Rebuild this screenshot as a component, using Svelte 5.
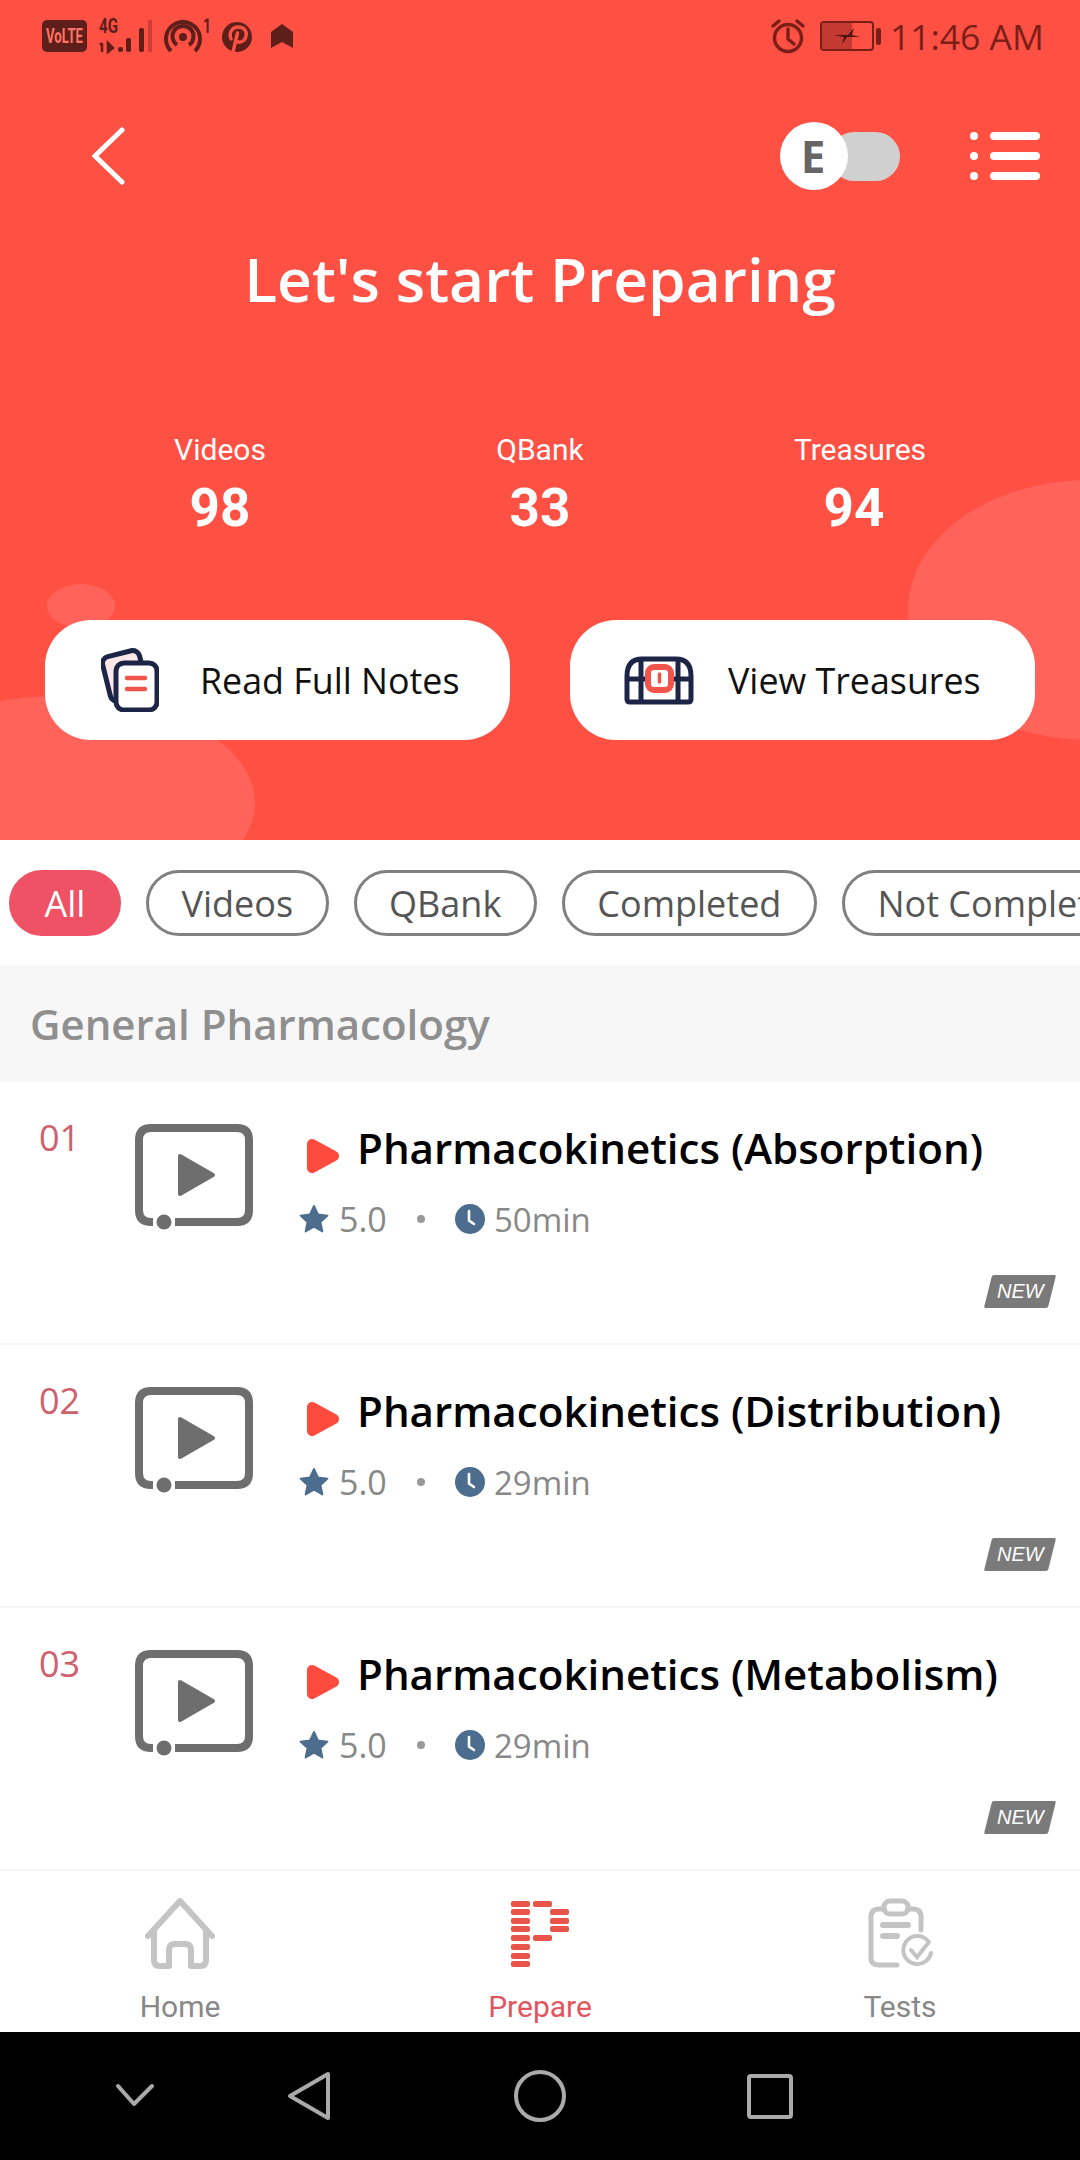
<script>
  const stats = [
    { label: "Videos", value: "98" },
    { label: "QBank", value: "33" },
    { label: "Treasures", value: "94", nudge: true }
  ];
  const filters = ["All", "Videos", "QBank", "Completed", "Not Completed"];
  const lessons = [
    { no: "01", title: "Pharmacokinetics (Absorption)", time: "50min" },
    { no: "02", title: "Pharmacokinetics (Distribution)", time: "29min" },
    { no: "03", title: "Pharmacokinetics (Metabolism)", time: "29min" }
  ];
  const pLeft = [3, 11, 20, 28, 37, 46, 55, 63];
  const pRight = [
    { x: 22, y: 3 },
    { x: 39, y: 11 },
    { x: 39, y: 20 },
    { x: 39, y: 28 },
    { x: 22, y: 37 }
  ];
</script>

<div class="screen">
  <header class="hero">
    <span class="blob blob-right"></span>
    <span class="blob blob-small"></span>
    <span class="blob blob-left"></span>

    <div class="status">
      <svg class="status-left" width="252" height="56" viewBox="0 -8 252 56">
        <rect x="0" y="4" width="45" height="32" rx="5" fill="#5e1e1a" />
        <text x="4" y="27" class="volte" textLength="37" lengthAdjust="spacingAndGlyphs">VoLTE</text>
        <text x="57" y="17" class="net" textLength="19" lengthAdjust="spacingAndGlyphs">4G</text>
        <path d="M60 27 v9 M58 29 l2 -2 M66 27 v9 l5 -4 z" stroke="#5e1e1a" stroke-width="2.5" fill="#5e1e1a" />
        <rect x="76" y="31" width="5" height="5" rx="2" fill="#5e1e1a" />
        <rect x="84" y="22" width="5" height="14" rx="2" fill="#5e1e1a" />
        <rect x="97" y="12" width="5" height="24" rx="2" fill="#5e1e1a" />
        <rect x="106" y="4" width="4" height="32" fill="#5e1e1a" opacity="0.3" />
        <circle cx="141" cy="21" r="4" fill="#5e1e1a" />
        <path d="M135 29 A10.5 10.5 0 1 1 147 29" fill="none" stroke="#5e1e1a" stroke-width="4" />
        <path d="M129 35 A17 17 0 1 1 153 35" fill="none" stroke="#5e1e1a" stroke-width="4" />
        <text x="161" y="17" class="net" textLength="8" lengthAdjust="spacingAndGlyphs">1</text>
        <circle cx="195" cy="21" r="15" fill="#5e1e1a" />
        <path d="M191 36 L195.5 17 M189 23 C186 15 192 11 196 11 C203 11 205 16 204 20 C203 26 196 28 193.5 24" fill="none" stroke="#ff5044" stroke-width="3.4" stroke-linecap="round" />
        <path d="M229 16 L240 8 L251 16 V32 L240 26 L229 32 Z" fill="#5e1e1a" />
      </svg>
      <div class="status-right">
        <svg width="34" height="36" viewBox="0 0 34 36" fill="none" stroke="#7a1f18" stroke-width="3.4">
          <circle cx="17" cy="20" r="13.5" />
          <path d="M17 11 V21 L23 26" stroke-linecap="round" />
          <path d="M2 8 L8 3 M32 8 L26 3" stroke-linecap="round" />
        </svg>
        <svg class="battery" width="62" height="30" viewBox="0 0 62 30">
          <rect x="1" y="1" width="52" height="28" rx="3" fill="none" stroke="#7a1f18" stroke-width="2" />
          <rect x="2" y="2" width="30" height="26" fill="#c43a33" />
          <path d="M14 14 L28 14 L34 7 L32 14 L40 16 L27 16 L22 23 L24 16 Z" fill="#4d1511" />
          <rect x="56" y="7" width="5" height="17" rx="2" fill="#7a1f18" />
        </svg>
        <span class="time">11:46 AM</span>
      </div>
    </div>

    <div class="toolbar">
      <svg class="back" width="34" height="58" viewBox="0 0 34 58" fill="none" stroke="#fff" stroke-width="5" stroke-linecap="round">
        <path d="M30 3 L3 29 L30 55" />
      </svg>
      <div class="toggle">
        <span class="knob">E</span>
      </div>
      <svg class="menu" width="70" height="50" viewBox="0 0 70 50" fill="#fff">
        <circle cx="4" cy="5" r="4" />
        <circle cx="4" cy="25" r="4" />
        <circle cx="4" cy="45" r="4" />
        <rect x="20" y="1" width="50" height="8" rx="4" />
        <rect x="20" y="21" width="50" height="8" rx="4" />
        <rect x="20" y="41" width="50" height="8" rx="4" />
      </svg>
    </div>

    <h1>Let's start Preparing</h1>

    <div class="stats">
      {#each stats as s}
        <div class="stat">
          <span class="stat-label">{s.label}</span>
          <span class="stat-value" class:nudge={s.nudge}>{s.value}</span>
        </div>
      {/each}
    </div>

    <div class="actions">
      <button class="action notes">
        <svg width="58" height="64" viewBox="0 0 58 64">
          <rect x="5" y="5" width="38" height="46" rx="7" fill="#fbe6e8" stroke="#1d2547" stroke-width="5" transform="rotate(-14 24 28)" />
          <rect x="15" y="15" width="41" height="47" rx="8" fill="#fff" stroke="#1d2547" stroke-width="5" />
          <path d="M26 30 H44 M26 41 H44" stroke="#f0544a" stroke-width="4.5" stroke-linecap="round" />
        </svg>
        <span>Read Full Notes</span>
      </button>
      <button class="action treasure">
        <svg width="70" height="49" viewBox="0 0 70 49">
          <g fill="none" stroke="#1d2547" stroke-width="5">
            <path d="M3 20 Q3 3 18 3 H52 Q67 3 67 20 V43 Q67 46 64 46 H6 Q3 46 3 43 Z" />
            <path d="M3 23 H67 M17 3 V46 M54 3 V46" />
          </g>
          <rect x="21" y="9" width="28" height="28" fill="#fff" />
          <rect x="24" y="11" width="23" height="23" rx="6" fill="none" stroke="#f0544a" stroke-width="6" />
          <path d="M35.5 18 V26" stroke="#f0544a" stroke-width="3.5" stroke-linecap="round" />
        </svg>
        <span>View Treasures</span>
      </button>
    </div>
  </header>

  <div class="filters">
    {#each filters as f, i}
      <span class="pill" class:active={i === 0}>{f}</span>
    {/each}
  </div>

  <div class="section">General Pharmacology</div>

  <div class="list">
    {#each lessons as l}
      <article class="lesson">
        <div class="lesson-main">
          <span class="no">{l.no}</span>
          <svg class="thumb" width="118" height="106" viewBox="0 0 118 106" fill="none">
            <path d="M18 98 H16 Q4 98 4 86 V16 Q4 4 16 4 H102 Q114 4 114 16 V86 Q114 98 102 98 H40" stroke="#6e6e6e" stroke-width="8" />
            <circle cx="29" cy="98" r="7.5" fill="#6e6e6e" />
            <path d="M45 32 L78 51 L45 70 Z" fill="#6e6e6e" stroke="#6e6e6e" stroke-width="4" stroke-linejoin="round" />
          </svg>
          <div class="info">
            <div class="title-line">
              <svg width="34" height="36" viewBox="0 0 34 36">
                <path d="M6 6 L28 18 L6 30 Z" fill="#ff4b3e" stroke="#ff4b3e" stroke-width="10" stroke-linejoin="round" />
              </svg>
              <h2>{l.title}</h2>
            </div>
            <div class="meta">
              <svg width="30" height="30" viewBox="0 0 24 24">
                <path d="M12 1.5 L15.2 8.4 L22.8 9.3 L17.2 14.4 L18.7 22 L12 18.2 L5.3 22 L6.8 14.4 L1.2 9.3 L8.8 8.4 Z" fill="#4d6d8e" stroke="#4d6d8e" stroke-width="1.5" stroke-linejoin="round" />
              </svg>
              <span class="rating">5.0</span>
              <span class="dot"></span>
              <svg width="30" height="30" viewBox="0 0 30 30">
                <circle cx="15" cy="15" r="15" fill="#4d6d8e" />
                <path d="M14 7 V16.5 L19 20" fill="none" stroke="#fff" stroke-width="2.6" stroke-linecap="round" />
              </svg>
              <span class="duration">{l.time}</span>
            </div>
          </div>
        </div>
        <span class="new"><em>NEW</em></span>
      </article>
    {/each}
  </div>

  <nav class="tabs">
    <div class="tab">
      <svg width="70" height="71" viewBox="0 0 70 71" fill="none" stroke="#c4c4c4" stroke-width="6" stroke-linecap="round" stroke-linejoin="round">
        <path d="M3 38 L35 3 L67 38" />
        <path d="M9 32 V62 Q9 68 15 68 H24 V52 Q24 46 30 46 H40 Q46 46 46 52 V68 H55 Q61 68 61 62 V32" />
      </svg>
      <span>Home</span>
    </div>
    <div class="tab on">
      <svg width="58" height="71" viewBox="0 0 58 71" fill="#e9544a">
        {#each pLeft as y}
          <rect x="0" {y} width="19" height="6" rx="2" />
        {/each}
        {#each pRight as r}
          <rect x={r.x} y={r.y} width="19" height="6" rx="2" />
        {/each}
      </svg>
      <span>Prepare</span>
    </div>
    <div class="tab">
      <svg width="66" height="71" viewBox="0 0 66 71" fill="none" stroke="#c4c4c4" stroke-width="5" stroke-linecap="round">
        <path d="M17 11 H12 Q4 11 4 19 V60 Q4 67 12 67 H30" />
        <path d="M41 11 H46 Q54 11 54 19 V32" />
        <rect x="17" y="3" width="24" height="13" rx="6" />
        <path d="M16 27 H41 M16 38 H30" stroke-width="6" />
        <path d="M61 43 A14 14 0 1 0 64 55" stroke-width="4" />
        <path d="M44 52 L50 59 L62 44" stroke-width="4" />
      </svg>
      <span>Tests</span>
    </div>
  </nav>

  <div class="softkeys">
    <svg width="1080" height="128" viewBox="0 0 1080 128" fill="none" stroke="#aaa" stroke-width="4" stroke-linejoin="round" stroke-linecap="round">
      <path d="M118 54 L134 72 L152 54" />
      <path d="M328 42 L328 86 L290 64 Z" />
      <circle cx="540" cy="64" r="24" />
      <rect x="749" y="44" width="42" height="41" rx="2" />
    </svg>
  </div>
</div>

<style>
  :global(body) {
    margin: 0;
    background: #fff;
  }
  .screen {
    width: 1080px;
    height: 2160px;
    display: flex;
    flex-direction: column;
    overflow: hidden;
    font-family: "Open Sans", sans-serif;
  }
  .hero {
    position: relative;
    height: 840px;
    flex: none;
    overflow: hidden;
    background: #ff5044;
  }
  .blob {
    position: absolute;
    border-radius: 50%;
    background: #ff635a;
  }
  .blob-right {
    left: 908px;
    top: 480px;
    width: 364px;
    height: 260px;
  }
  .blob-small {
    left: 47px;
    top: 584px;
    width: 68px;
    height: 44px;
  }
  .blob-left {
    left: -135px;
    top: 696px;
    width: 390px;
    height: 214px;
  }
  .status {
    position: relative;
    height: 72px;
    display: flex;
    align-items: center;
    justify-content: space-between;
    padding: 0 36px 0 42px;
  }
  .volte {
    font: 700 20px Roboto, sans-serif;
    fill: #ff7468;
  }
  .net {
    font: 700 20px Roboto, sans-serif;
    fill: #5e1e1a;
  }
  .status-right {
    display: flex;
    align-items: center;
    gap: 14.5px;
  }
  .battery {
    margin-right: -6.5px;
  }
  .time {
    font-size: 35.5px;
    line-height: 40px;
    color: #7a1f18;
  }
  .toolbar {
    position: relative;
    height: 68px;
    margin-top: 50px;
    display: flex;
    align-items: center;
    padding: 0 40px 0 92px;
  }
  .toggle {
    position: relative;
    width: 70px;
    height: 49px;
    margin-left: auto;
    border-radius: 25px;
    background: #d0d0d0;
  }
  .knob {
    position: absolute;
    left: -50px;
    top: -10px;
    width: 68px;
    height: 68px;
    border-radius: 50%;
    background: #fff;
    display: flex;
    align-items: center;
    justify-content: center;
    font-size: 44px;
    font-weight: 700;
    color: #666;
    padding-right: 2px;
    box-sizing: border-box;
  }
  .menu {
    margin-left: 70px;
  }
  h1 {
    position: relative;
    margin: 49px 0 0;
    height: 80px;
    font-size: 60.5px;
    line-height: 80px;
    font-weight: 600;
    text-align: center;
    color: #fff;
  }
  .stats {
    position: relative;
    margin-top: 113px;
    padding: 0 60px;
    display: grid;
    grid-template-columns: repeat(3, 1fr);
    font-family: Roboto, sans-serif;
    color: #fff;
  }
  .stat {
    display: flex;
    flex-direction: column;
    align-items: center;
  }
  .stat-label {
    font-size: 30px;
    line-height: 36px;
  }
  .stat-value {
    margin-top: 10px;
    font-size: 53px;
    line-height: 60px;
    font-weight: 700;
  }
  .nudge {
    margin-right: 12px;
  }
  .actions {
    position: relative;
    margin-top: 82px;
    padding: 0 45px;
    display: flex;
    justify-content: space-between;
  }
  .action {
    width: 465px;
    height: 120px;
    border: 0;
    border-radius: 46px;
    background: #fff;
    display: flex;
    align-items: center;
    font-family: inherit;
    font-size: 35.8px;
    color: #111;
  }
  .notes {
    padding: 0 0 0 56px;
    gap: 41px;
  }
  .treasure {
    padding: 0 0 0 54px;
    gap: 34px;
  }
  .filters {
    height: 125px;
    flex: none;
    box-sizing: border-box;
    padding: 30px 0 0 9px;
    display: flex;
    align-items: flex-start;
    gap: 25px;
    overflow: hidden;
  }
  .pill {
    flex: none;
    box-sizing: border-box;
    height: 66px;
    padding: 0 32.5px;
    border: 3px solid #808080;
    border-radius: 33px;
    font-size: 36px;
    line-height: 62px;
    color: #555;
  }
  .pill.active {
    border-color: #ee5264;
    background: #ee5264;
    color: #fff;
  }
  .section {
    height: 117px;
    flex: none;
    box-sizing: border-box;
    padding-left: 30px;
    background: #f7f7f7;
    font-size: 42px;
    font-weight: 600;
    line-height: 118px;
    color: #8f8f8f;
  }
  .lesson {
    height: 263px;
    box-sizing: border-box;
    border-bottom: 2px solid #f4f4f4;
    padding: 42px 24px 0 0;
    display: flex;
    flex-direction: column;
  }
  .lesson-main {
    display: flex;
    align-items: flex-start;
    height: 151px;
  }
  .no {
    width: 135px;
    flex: none;
    box-sizing: border-box;
    padding-left: 39px;
    margin-top: -7px;
    font-size: 36px;
    line-height: 42px;
    color: #d0606c;
  }
  .thumb {
    flex: none;
  }
  .info {
    margin-left: 46px;
    display: flex;
    flex-direction: column;
  }
  .title-line {
    display: flex;
    align-items: flex-start;
    gap: 17px;
    padding: 0 0 0 7px;
  }
  .title-line svg {
    margin-top: 14px;
  }
  h2 {
    margin: -6px 0 0;
    font-size: 42.1px;
    line-height: 60px;
    font-weight: 600;
    color: #000;
    white-space: nowrap;
  }
  .meta {
    margin-top: 26px;
    display: flex;
    align-items: center;
    height: 30px;
    font-size: 34px;
    color: #888;
  }
  .rating {
    margin-left: 10px;
    width: 47px;
  }
  .dot {
    width: 8px;
    height: 8px;
    margin: 0 30px 0 31px;
    border-radius: 50%;
    background: #999;
  }
  .duration {
    margin-left: 9px;
    font-size: 33px;
  }
  .new {
    align-self: flex-end;
    width: 64px;
    height: 33px;
    transform: skewX(-14deg);
    margin-right: 4px;
    border-radius: 2px;
    background: #7a7a7a;
    display: flex;
    align-items: center;
    justify-content: center;
  }
  .new em {
    transform: skewX(14deg);
    font: italic 20px "Liberation Sans", sans-serif;
    color: #fff;
  }
  .tabs {
    flex: 1;
    display: grid;
    grid-template-columns: repeat(3, 1fr);
    padding-top: 27px;
    font-family: Roboto, sans-serif;
    font-size: 30px;
    color: #888;
  }
  .tab {
    display: flex;
    flex-direction: column;
    align-items: center;
    gap: 20px;
  }
  .tab.on {
    color: #e0565f;
  }
  .softkeys {
    height: 128px;
    flex: none;
    background: #000;
  }
  .softkeys svg {
    display: block;
  }
</style>
